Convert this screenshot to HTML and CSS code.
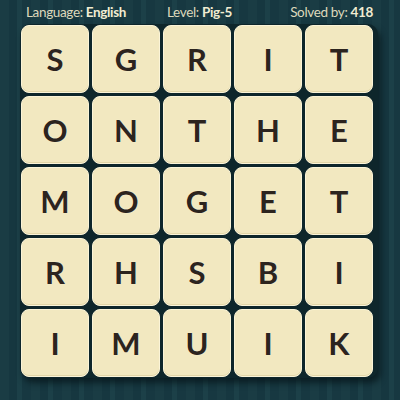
FILE: index.html
```html
<!DOCTYPE html>
<html>
<head>
<meta charset="utf-8">
<link rel="stylesheet" href="styles.css">
</head>
<body>
<div class="page">
  <div class="header">
    <span class="item left">Language: <b>English</b></span>
    <span class="item mid">Level: <b>Pig-5</b></span>
    <span class="item right">Solved by: <b>418</b></span>
  </div>
  <div class="board">
    <div class="tile">S</div><div class="tile">G</div><div class="tile">R</div><div class="tile">I</div><div class="tile">T</div>
    <div class="tile">O</div><div class="tile">N</div><div class="tile">T</div><div class="tile">H</div><div class="tile">E</div>
    <div class="tile">M</div><div class="tile">O</div><div class="tile">G</div><div class="tile">E</div><div class="tile">T</div>
    <div class="tile">R</div><div class="tile">H</div><div class="tile">S</div><div class="tile">B</div><div class="tile">I</div>
    <div class="tile">I</div><div class="tile">M</div><div class="tile">U</div><div class="tile">I</div><div class="tile">K</div>
  </div>
</div>
</body>
</html>
```
FILE: styles.css
```css
html, body {
  margin: 0;
  padding: 0;
}
body {
  width: 400px;
  height: 400px;
  overflow: hidden;
  background: repeating-linear-gradient(90deg, #1a3c44 0px, #1a3c44 9px, #163740 9px, #163740 17px, #1c4048 17px, #1c4048 22px, #173841 22px, #173841 31px);
  font-family: "Lato", "Open Sans", sans-serif;
}
.page {
  display: flex;
  flex-direction: column;
  width: 400px;
  height: 400px;
}
.header {
  display: grid;
  grid-template-columns: 1fr auto 1fr;
  align-items: center;
  height: 23px;
  padding: 0 27px 0 26px;
  color: #ddd8bc;
  font-size: 13.5px;
  letter-spacing: -0.35px;
}
.left { justify-self: start; }
.mid { justify-self: center; }
.right { justify-self: end; }
.header b {
  font-weight: 700;
  color: #f1ecd2;
}
.board {
  margin: 1px 0 0 20px;
  width: 356px;
  display: grid;
  grid-template-columns: repeat(5, 68px);
  grid-auto-rows: 68px;
  gap: 3px;
  padding: 1px;
  background: #0e262b;
  border-radius: 10px;
  box-shadow: 3px 5px 6px rgba(5, 20, 24, 0.7);
}
.tile {
  display: flex;
  align-items: center;
  justify-content: center;
  background: #f2e8c0;
  border-radius: 8px;
  border: 1px solid #fbf4d8;
  box-sizing: border-box;
  box-shadow: inset 0 -1px 0 #e2d6a8;
  color: #2c241e;
  font-size: 31px;
  font-weight: 700;
  text-shadow: 0 0 1px #fff6d8;
}
```
